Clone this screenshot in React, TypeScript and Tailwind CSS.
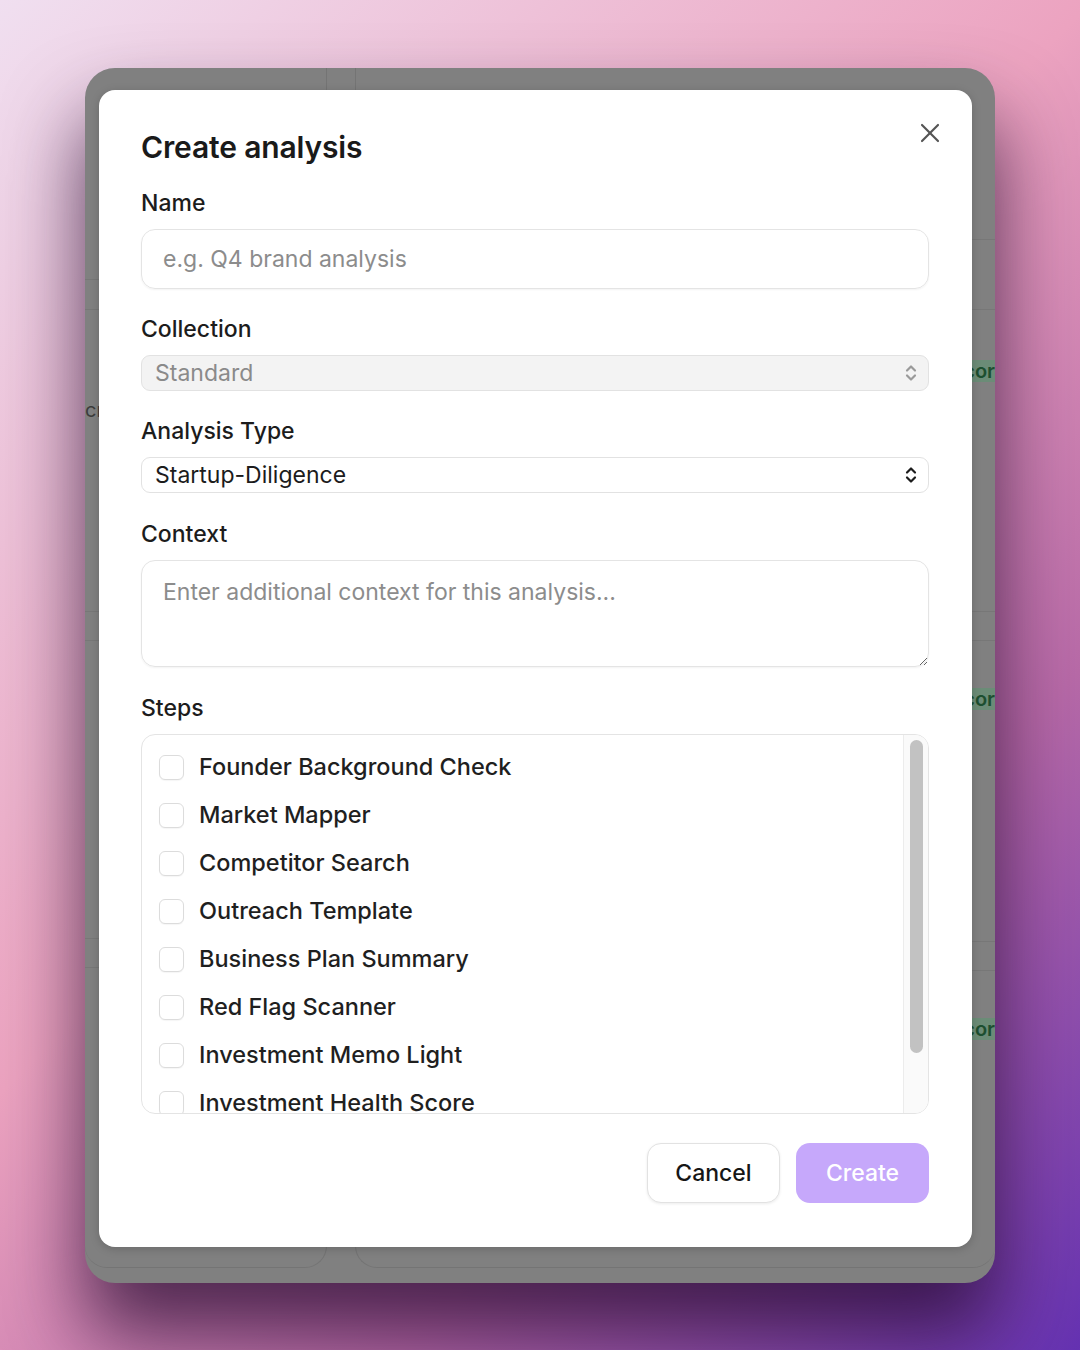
import React from 'react';
import { X } from 'lucide-react';

const steps = [
  'Founder Background Check',
  'Market Mapper',
  'Competitor Search',
  'Outreach Template',
  'Business Plan Summary',
  'Red Flag Scanner',
  'Investment Memo Light',
  'Investment Health Score',
];

function UpDown({ className }: { className?: string }) {
  return (
    <svg width="14" height="20" viewBox="0 0 14 20" fill="none" stroke="currentColor" strokeWidth="2.2" strokeLinecap="round" strokeLinejoin="round" className={className}>
      <path d="M3 7.5 7 3.5l4 4" />
      <path d="M3 12.5 7 16.5l4-4" />
    </svg>
  );
}

export default function App() {
  return (
    <div className="w-[1080px] h-[1350px] overflow-hidden bg-[linear-gradient(135deg,#f0dff0_0%,#eca3c0_45%,#b86aa8_72%,#6532b2_100%)] pt-[68px] pl-[85px] [font-family:Inter,'Noto_Sans',sans-serif]">
      {/* app window, dimmed behind the dialog */}
      <div className="relative w-[910px] h-[1215px] rounded-[30px] bg-[#808080] overflow-hidden shadow-[0_50px_80px_rgba(35,8,45,0.75)] flex gap-[28px] pb-[15px]">
        <div className="w-[242px] rounded-b-[22px] border-r border-b border-[#747474] flex flex-col">
          <div className="h-[212px] border-b border-[#777777]" />
          <div className="h-[30px] border-b border-[#777777]" />
          <div className="h-[302px] border-b border-[#777777] pt-[88px] text-[20px] leading-[24px] text-[#3c3c3c]">cr</div>
          <div className="h-[29px] border-b border-[#777777]" />
          <div className="h-[298px] border-b border-[#777777]" />
          <div className="h-[29px] border-b border-[#777777]" />
        </div>
        <div className="flex-1 rounded-b-[22px] border-l border-b border-[#747474] flex flex-col">
          <div className="h-[172px] border-b border-[#777777]" />
          <div className="h-[70px] border-b border-[#777777]" />
          <div className="h-[302px] border-b border-[#777777] pt-[50px] flex justify-end items-start">
            <span className="bg-[#6b8c77] text-[#1d4f30] pl-[6px] text-[20px] leading-[22px] font-semibold">Scor</span>
          </div>
          <div className="h-[29px] border-b border-[#777777]" />
          <div className="h-[301px] border-b border-[#777777] pt-[47px] flex justify-end items-start">
            <span className="bg-[#6b8c77] text-[#1d4f30] pl-[6px] text-[20px] leading-[22px] font-semibold">Scor</span>
          </div>
          <div className="h-[29px] border-b border-[#777777]" />
          <div className="pt-[47px] flex justify-end items-start">
            <span className="bg-[#6b8c77] text-[#1d4f30] pl-[6px] text-[20px] leading-[22px] font-semibold">Scor</span>
          </div>
        </div>

        {/* dialog */}
        <div className="absolute left-[14px] top-[22px] w-[873px] h-[1157px] bg-white rounded-[16px] shadow-[0_2px_10px_rgba(0,0,0,0.18)] pl-[42px] pr-[43px] pt-[39px] flex flex-col">
          <button className="absolute left-[815px] top-[27px] text-[#555555]">
            <X size={32} strokeWidth={1.6} />
          </button>

          <h2 className="text-[30px] leading-[36px] font-semibold text-[#1a1a1a] tracking-[-0.005em]">Create analysis</h2>

          <label className="mt-[24px] text-[23px] leading-[28px] font-medium text-[#1c1c1c]">Name</label>
          <input
            placeholder="e.g. Q4 brand analysis"
            className="mt-[12px] h-[60px] w-full rounded-[14px] border border-[#e4e4e4] px-[21px] text-[23px] text-[#1c1c1c] shadow-[0_1px_2px_rgba(0,0,0,0.05)] placeholder:text-[#8c8c8c] outline-none"
          />

          <label className="mt-[26px] text-[23px] leading-[28px] font-medium text-[#1c1c1c]">Collection</label>
          <div className="mt-[12px] h-[36px] rounded-[9px] border border-[#e2e2e2] bg-[#f3f3f3] pl-[13px] pr-[10px] flex items-center justify-between text-[23px] text-[#8a8a8a]">
            <span>Standard</span>
            <UpDown className="text-[#9a9a9a]" />
          </div>

          <label className="mt-[26px] text-[23px] leading-[28px] font-medium text-[#1c1c1c]">Analysis Type</label>
          <div className="mt-[12px] h-[36px] rounded-[9px] border border-[#e2e2e2] bg-white pl-[13px] pr-[10px] flex items-center justify-between text-[23px] text-[#1c1c1c]">
            <span>Startup-Diligence</span>
            <UpDown className="text-[#1c1c1c]" />
          </div>

          <label className="mt-[27px] text-[23px] leading-[28px] font-medium text-[#1c1c1c]">Context</label>
          <textarea
            placeholder="Enter additional context for this analysis..."
            className="mt-[12px] h-[107px] w-full rounded-[14px] border border-[#e4e4e4] px-[21px] py-[17px] text-[23px] leading-[28px] text-[#1c1c1c] shadow-[0_1px_2px_rgba(0,0,0,0.05)] placeholder:text-[#8c8c8c] outline-none resize-y"
          />

          <label className="mt-[27px] text-[23px] leading-[28px] font-medium text-[#1c1c1c]">Steps</label>
          <div className="mt-[12px] h-[380px] rounded-[14px] border border-[#e4e4e4] flex overflow-hidden">
            <div className="flex-1 pl-[17px] pt-[8px] flex flex-col overflow-hidden">
              {steps.map((s) => (
                <div key={s} className="h-[48px] shrink-0 flex items-center gap-[15px]">
                  <span className="w-[25px] h-[25px] rounded-[6px] border border-[#dcdcdc] bg-white shadow-[0_1px_1px_rgba(0,0,0,0.04)]" />
                  <span className="text-[23.5px] font-medium text-[#1f1f1f]">{s}</span>
                </div>
              ))}
            </div>
            <div className="w-[25px] border-l border-[#ececec] bg-[#fafafa] pl-[6px] pt-[5px]">
              <div className="w-[13px] h-[313px] rounded-full bg-[#c2c2c2]" />
            </div>
          </div>

          <div className="mt-[29px] flex justify-end gap-[16px]">
            <button className="w-[133px] h-[60px] rounded-[14px] border border-[#e2e2e2] bg-white shadow-[0_1px_3px_rgba(0,0,0,0.08)] text-[23px] font-medium text-[#161616]">
              Cancel
            </button>
            <button className="w-[133px] h-[60px] rounded-[14px] bg-[#c6a8fb] text-[23px] font-medium text-white">
              Create
            </button>
          </div>
        </div>
      </div>
    </div>
  );
}
